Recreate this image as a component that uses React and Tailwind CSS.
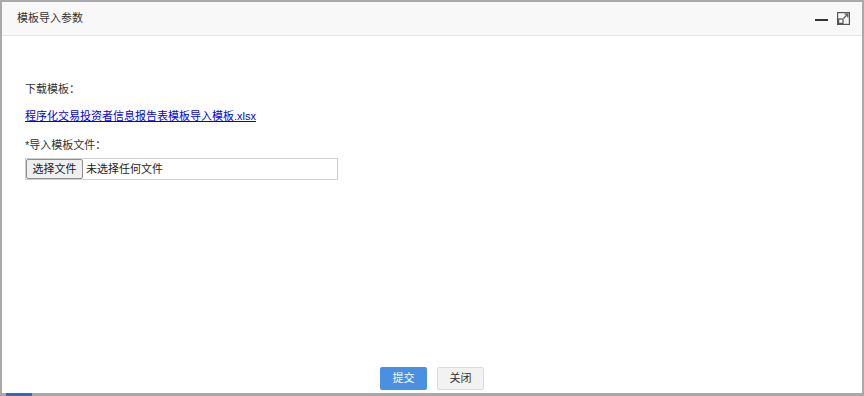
import React from "react";

const font = { fontFamily: '"Liberation Sans", "Noto Sans CJK SC", sans-serif' };

function MaximizeIcon() {
  return (
    <svg width="13" height="13" viewBox="0 0 13 13" fill="none" stroke="#555" strokeWidth="1.2">
      <rect x="0.6" y="0.6" width="11.8" height="11.8" />
      <rect x="1.6" y="7" width="4.4" height="4.4" />
      <path d="M6.5 6.5 L10.8 2.2" />
      <path d="M7.6 2.2 H10.8 V5.4" />
    </svg>
  );
}

export default function App() {
  return (
    <div
      className="w-[864px] h-[396px] bg-[#a9a9a9] pt-[2px] px-[2px] flex flex-col text-[11px] text-[#333]"
      style={font}
    >
      <div className="flex-1 bg-white flex flex-col min-h-0">
        <div className="h-[34px] bg-[#f8f8f8] border-b border-[#e6e6e6] flex items-center justify-between pl-[15px] pr-[12px]">
          <span className="text-[11px] text-[#333]">模板导入参数</span>
          <div className="flex items-center gap-[9px]">
            <div className="w-[13px] h-[2px] bg-[#333] mt-[2px]" />
            <MaximizeIcon />
          </div>
        </div>

        <div className="flex-1 pl-[23px] pt-[45px]">
          <div className="leading-[16px] text-[#333]">下载模板：</div>
          <div className="mt-[11px] leading-[16px]">
            <a href="#" className="text-[#0000ee] underline">
              程序化交易投资者信息报告表模板导入模板.xlsx
            </a>
          </div>
          <div className="mt-[13px] leading-[16px] text-[#333]">*导入模板文件：</div>
          <div className="mt-[5px] w-[313px] h-[22px] border border-[#cfcfcf] flex items-center">
            <button className="h-[20px] w-[57px] bg-[#efefef] border border-[#8f8f8f] rounded-[2px] text-[11px] text-[#222]">
              选择文件
            </button>
            <span className="ml-[3px] text-[#222]">未选择任何文件</span>
          </div>
        </div>

        <div className="flex justify-center gap-[10px] pb-[3px]">
          <button className="w-[47px] h-[23px] bg-[#4a90e2] text-white text-[11px] rounded-[2px]">
            提交
          </button>
          <button className="w-[47px] h-[23px] bg-[#f2f2f2] border border-[#dcdcdc] text-[#333] text-[11px] rounded-[2px]">
            关闭
          </button>
        </div>
      </div>
      <div className="h-[3px] flex">
        <div className="ml-[4px] w-[26px] h-[3px] bg-[#3a67b0]" />
      </div>
    </div>
  );
}
